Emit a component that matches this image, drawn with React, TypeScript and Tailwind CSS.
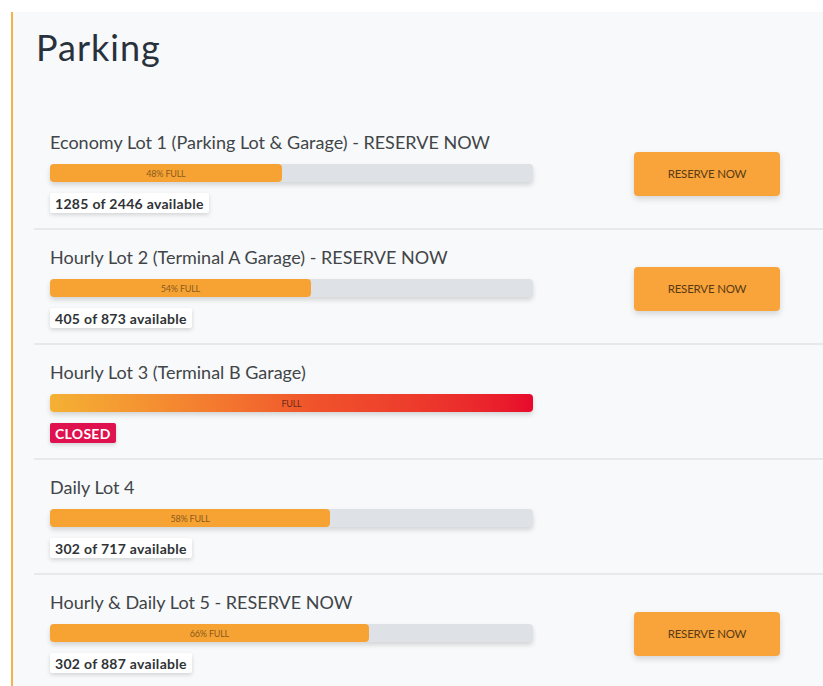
import React from "react";

type Lot = {
  name: string;
  reserve: boolean;
  pct: number;
  available?: number;
  total?: number;
  closed?: boolean;
};

const lots: Lot[] = [
  { name: "Economy Lot 1 (Parking Lot & Garage) - RESERVE NOW", reserve: true, pct: 48, available: 1285, total: 2446 },
  { name: "Hourly Lot 2 (Terminal A Garage) - RESERVE NOW", reserve: true, pct: 54, available: 405, total: 873 },
  { name: "Hourly Lot 3 (Terminal B Garage)", reserve: false, pct: 100, closed: true },
  { name: "Daily Lot 4", reserve: false, pct: 58, available: 302, total: 717 },
  { name: "Hourly & Daily Lot 5 - RESERVE NOW", reserve: true, pct: 66, available: 302, total: 887 },
];

function Bar({ lot }: { lot: Lot }) {
  if (lot.closed) {
    return (
      <div className="h-[18px] w-[483px] rounded-[4px] bg-gradient-to-r from-[#f4b134] via-[#f0522b] via-55% to-[#e8072c] shadow-[0_3px_5px_rgba(0,0,0,0.15)] flex items-center justify-center">
        <span className="text-[9px] leading-none text-[#6b2a1a] tracking-tight">FULL</span>
      </div>
    );
  }
  return (
    <div className="h-[18px] w-[483px] rounded-[4px] bg-[#dee1e6] shadow-[0_3px_5px_rgba(0,0,0,0.15)]">
      <div
        className="h-full rounded-[4px] bg-[#f7a334] flex items-center justify-center"
        style={{ width: `${lot.pct}%` }}
      >
        <span className="text-[9px] leading-none text-[#8a5a1c] tracking-tight">{lot.pct}% FULL</span>
      </div>
    </div>
  );
}

function Row({ lot, first }: { lot: Lot; first: boolean }) {
  return (
    <div
      className={
        first
          ? "flex items-center pl-4 pt-[18px] pb-[15px] h-[115px]"
          : "flex items-center border-t-2 border-[#e8e9ec] pl-4 pt-[16px] pb-[15px] h-[115px]"
      }
    >
      <div className="flex flex-col">
        <div className="text-[18px] leading-[22px] text-[#414548] h-[22px]">{lot.name}</div>
        <div className="mt-[11px]">
          <Bar lot={lot} />
        </div>
        <div className="mt-[11px] flex">
          {lot.closed ? (
            <span className="h-[20px] px-[5px] flex items-center rounded-[2px] bg-[#e0114f] text-white text-[14px] tracking-[0.3px] font-bold shadow-[0_2px_4px_rgba(0,0,0,0.15)]">
              CLOSED
            </span>
          ) : (
            <span className="h-[20px] px-[5px] flex items-center rounded-[2px] bg-white text-[#2f3337] text-[14px] tracking-[0.3px] font-bold shadow-[0_2px_4px_rgba(0,0,0,0.15)]">
              {lot.available} of {lot.total} available
            </span>
          )}
        </div>
      </div>
      {lot.reserve && (
        <button className="ml-[101px] mt-[4px] w-[146px] h-[44px] rounded-[4px] bg-[#f8a43a] text-[11.5px] tracking-[-0.2px] text-[#5a3a14] shadow-[0_3px_6px_rgba(0,0,0,0.15)]">
          RESERVE NOW
        </button>
      )}
    </div>
  );
}

export default function App() {
  return (
    <div
      className="w-[823px] h-[686px] overflow-hidden bg-white pl-[11px] pt-[12px]"
      style={{ fontFamily: "Lato, 'Noto Sans', sans-serif" }}
    >
      <div className="h-full border-l-2 border-[#f3b24c] bg-[#f8f9fb] pl-[21px]">
        <h1 className="pt-[15px] text-[36px] leading-[40px] tracking-[1px] text-[#28323c] pl-[2px]">Parking</h1>
        <div className="mt-[46px]">
          {lots.map((lot, i) => (
            <Row key={lot.name} lot={lot} first={i === 0} />
          ))}
        </div>
      </div>
    </div>
  );
}
